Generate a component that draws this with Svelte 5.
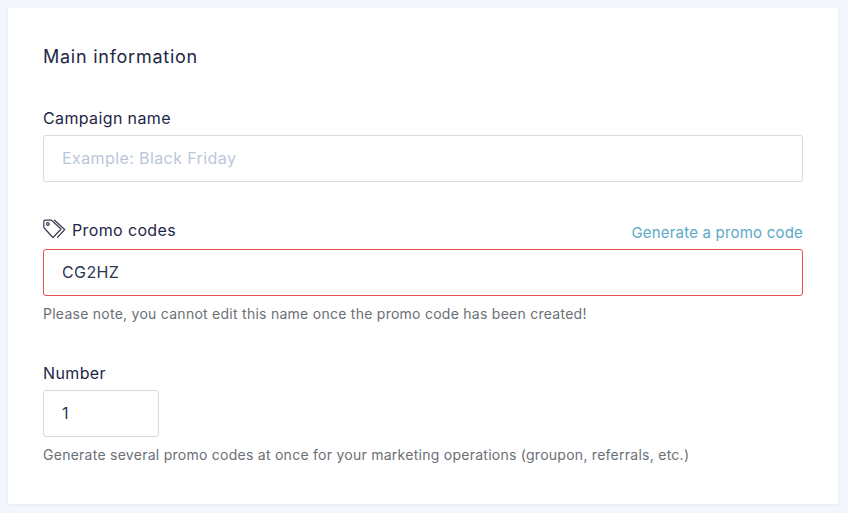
<script lang="ts">
	let campaign = $state('');
	let code = $state('CG2HZ');
	let count = $state('1');
</script>

<main class="page">
	<form class="card">
		<h2>Main information</h2>

		<div class="field first">
			<label for="campaign">Campaign name</label>
			<input id="campaign" type="text" placeholder="Example: Black Friday" bind:value={campaign} />
		</div>

		<div class="field codes">
			<div class="label-row">
				<label for="code">
					<svg width="24" height="20" viewBox="0 0 24 20" fill="none" stroke="#3b3a4e" stroke-width="1.2" stroke-linejoin="round" stroke-linecap="round">
						<path d="M0.8 2.5 Q0.8 1.2 2 1.2 H8.5 L18 10 L10.6 18 Q10 18.6 9.4 18 L1.2 9 Q0.8 8.5 0.8 8 Z" />
						<path d="M11.5 1.2 L21.7 10.5 L14.5 18.3" />
						<circle cx="4.9" cy="5" r="1.3" />
					</svg>
					Promo codes
				</label>
				<a href="#generate">Generate a promo code</a>
			</div>
			<input id="code" class="invalid" type="text" bind:value={code} />
			<p class="help">Please note, you cannot edit this name once the promo code has been created!</p>
		</div>

		<div class="field number">
			<label for="count">Number</label>
			<input id="count" class="short" type="text" bind:value={count} />
			<p class="help">Generate several promo codes at once for your marketing operations (groupon, referrals, etc.)</p>
		</div>
	</form>
</main>

<style>
	:global(body) {
		margin: 0;
		background: #f3f6fb;
	}

	.page {
		padding: 8px 10px 9px 8px;
		font-family: Inter, "Open Sans", sans-serif;
		color: #1d2745;
	}

	.card {
		background: #fff;
		height: 496px;
		box-sizing: border-box;
		padding: 38px 35px 0;
		box-shadow: 0 1px 4px rgba(40, 60, 110, 0.06);
	}

	h2 {
		margin: 0;
		font-size: 18px;
		line-height: 22px;
		font-weight: 400;
		letter-spacing: 0.75px;
	}

	.field {
		display: flex;
		flex-direction: column;
	}

	.first {
		margin-top: 41px;
	}

	.codes {
		margin-top: 35px;
	}

	.number {
		margin-top: 42px;
	}

	label {
		display: flex;
		align-items: center;
		font-size: 16px;
		line-height: 18px;
		height: 18px;
		margin-bottom: 8px;
		letter-spacing: 0.37px;
	}

	.label-row {
		display: flex;
		justify-content: space-between;
		align-items: flex-end;
		height: 27px;
		margin-bottom: 5px;
	}

	.label-row label {
		margin-bottom: 5px;
		gap: 5px;
	}

	.label-row svg {
		margin-top: -2px;
	}

	a {
		color: #5aa9c9;
		font-size: 15px;
		line-height: 18px;
		margin-bottom: 2px;
		letter-spacing: 0.2px;
		text-decoration: none;
	}

	input {
		box-sizing: border-box;
		width: 100%;
		height: 47px;
		border: 1px solid #d9dadd;
		border-radius: 3px;
		padding: 0 18px 1px;
		font-family: inherit;
		font-size: 16px;
		letter-spacing: 0.4px;
		color: #2a3650;
		background: #fff;
		outline: none;
	}

	input::placeholder {
		color: #bcc6da;
		opacity: 1;
	}

	.invalid {
		border-color: #e8504f;
	}

	.short {
		width: 116px;
	}

	.help {
		margin: 10px 0 0;
		font-size: 14px;
		line-height: 16px;
		color: #6b6f76;
		letter-spacing: 0.26px;
	}
</style>
